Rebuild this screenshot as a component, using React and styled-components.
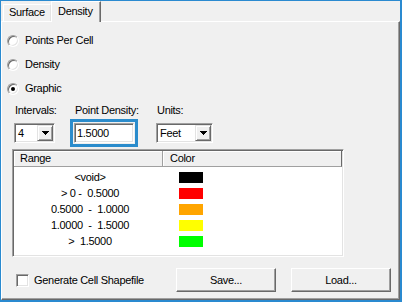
import React from 'react';
import styled, { createGlobalStyle } from 'styled-components';

const Global = createGlobalStyle`
  html, body { margin: 0; padding: 0; background: #f0f0f0; }
  body { font-family: "Liberation Sans", Arial, sans-serif; font-size: 11px; color: #000; }
`;

const Window = styled.div`
  width: 402px;
  height: 302px;
  box-sizing: border-box;
  border-style: solid;
  border-color: #2a8ad0;
  border-width: 1px 2px 2px 1px;
  background: #f0f0f0;
  display: flex;
  flex-direction: column;
  letter-spacing: -0.3px;
`;

const TabStrip = styled.div`
  height: 20px;
  display: flex;
  align-items: flex-end;
  padding-left: 2px;
`;

const Tab = styled.div`
  box-sizing: border-box;
  position: relative;
  z-index: ${p => (p.$active ? 1 : 0)};
  width: ${p => p.$w}px;
  height: ${p => (p.$active ? '21px' : '17px')};
  margin-bottom: ${p => (p.$active ? '-1px' : '0')};
  padding-left: ${p => (p.$active ? '6px' : '5px')};
  line-height: ${p => (p.$active ? '19px' : '15px')};
  background: #f0f0f0;
  border-style: solid;
  border-width: 1px 1px 0 1px;
  border-color: #fff ${p => (p.$active ? '#696969' : '#e3e3e3')} transparent #fff;
  box-shadow: ${p => (p.$active ? 'inset -1px 0 #a0a0a0' : 'none')};
`;

const Panel = styled.div`
  flex: 1;
  box-sizing: border-box;
  border-style: solid;
  border-width: 1px;
  border-color: #fff #696969 #696969 #fff;
  box-shadow: inset -1px -1px #a0a0a0;
  display: flex;
  flex-direction: column;
`;

const RadioGroup = styled.div`
  display: flex;
  flex-direction: column;
  gap: 11px;
  margin: 12px 0 0 5px;
`;

const RadioRow = styled.label`
  display: flex;
  align-items: center;
  gap: 6px;
  height: 13px;
  line-height: 13px;
`;

const RadioCircle = styled.span`
  box-sizing: border-box;
  width: 12px;
  height: 12px;
  border-radius: 50%;
  background: #fff;
  border: 1px solid;
  border-color: #a0a0a0 #fff #fff #a0a0a0;
  box-shadow: inset 1px 1px #696969, inset -1px -1px #e3e3e3;
  display: flex;
  align-items: center;
  justify-content: center;
  &::after {
    content: '';
    width: 4px;
    height: 4px;
    border-radius: 50%;
    background: ${p => (p.$checked ? '#000' : 'transparent')};
  }
`;

const Fields = styled.div`
  display: grid;
  grid-template-columns: 56px 86px 57px;
  grid-template-rows: 13px 28px;
  row-gap: 2px;
  align-items: center;
  margin: 9px 0 0 12px;
`;

const FieldLabel = styled.div`
  line-height: 13px;
  padding-left: ${p => p.$pad}px;
`;

const Combo = styled.div`
  box-sizing: border-box;
  width: ${p => p.$w}px;
  height: 20px;
  padding: 1px;
  background: #fff;
  border: 1px solid;
  border-color: #a0a0a0 #fff #fff #a0a0a0;
  box-shadow: inset 1px 1px #696969, inset -1px -1px #e3e3e3;
  display: flex;
  align-items: center;
`;

const ComboText = styled.span`
  flex: 1;
  padding-left: 2px;
  line-height: 16px;
`;

const DropButton = styled.span`
  box-sizing: border-box;
  width: 16px;
  height: 16px;
  background: #f0f0f0;
  border: 1px solid;
  border-color: #e3e3e3 #696969 #696969 #e3e3e3;
  box-shadow: inset 1px 1px #fff, inset -1px -1px #a0a0a0;
  display: flex;
  align-items: center;
  justify-content: center;
`;

const FocusRing = styled.div`
  box-sizing: border-box;
  width: 68px;
  height: 28px;
  border: 3px solid #2b8ccc;
  padding: 1px;
`;

const Edit = styled.div`
  box-sizing: border-box;
  height: 20px;
  padding-left: 2px;
  background: #fff;
  border: 1px solid;
  border-color: #a0a0a0 #fff #fff #a0a0a0;
  box-shadow: inset 1px 1px #696969, inset -1px -1px #e3e3e3;
  line-height: 18px;
`;

const List = styled.div`
  box-sizing: border-box;
  width: 332px;
  height: 108px;
  margin: 2px 0 0 10px;
  padding: 1px;
  background: #fff;
  border: 1px solid;
  border-color: #a0a0a0 #fff #fff #a0a0a0;
  box-shadow: inset 1px 1px #696969, inset -1px -1px #e3e3e3;
`;

const HeaderRow = styled.div`
  display: grid;
  grid-template-columns: 149px 1fr;
  height: 16px;
`;

const HeaderCell = styled.div`
  box-sizing: border-box;
  background: #f0f0f0;
  border-right: 1px solid ${p => (p.$last ? '#696969' : '#a0a0a0')};
  border-bottom: 1px solid #a0a0a0;
  box-shadow: inset 1px 1px #fff;
  padding-left: ${p => p.$pad}px;
  line-height: 15px;
`;

const Rows = styled.div`
  padding-top: 2px;
`;

const Row = styled.div`
  display: grid;
  grid-template-columns: 149px 1fr;
  height: 16px;
  align-items: center;
`;

const RangeText = styled.div`
  text-align: center;
  white-space: pre;
  line-height: 16px;
  padding-left: 3px;
`;

const Swatch = styled.div`
  width: 24px;
  height: 11px;
  margin-left: 16px;
  background: ${p => p.$color};
`;

const BottomRow = styled.div`
  display: flex;
  align-items: center;
  height: 24px;
  margin-top: 11px;
  padding: 0 8px 0 14px;
`;

const CheckLabel = styled.label`
  display: flex;
  align-items: center;
  gap: 5px;
  line-height: 13px;
`;

const CheckBox = styled.span`
  box-sizing: border-box;
  width: 13px;
  height: 13px;
  background: #fff;
  border: 1px solid;
  border-color: #a0a0a0 #fff #fff #a0a0a0;
  box-shadow: inset 1px 1px #696969, inset -1px -1px #e3e3e3;
`;

const Buttons = styled.div`
  margin-left: auto;
  display: flex;
  gap: 15px;
`;

const Button = styled.div`
  box-sizing: border-box;
  width: 100px;
  height: 24px;
  background: #f0f0f0;
  border: 1px solid;
  border-color: #fff #696969 #696969 #fff;
  box-shadow: inset -1px -1px #a0a0a0;
  display: flex;
  align-items: center;
  justify-content: center;
  line-height: 13px;
`;

const Arrow = () => (
  <svg width="7" height="4" viewBox="0 0 7 4">
    <path d="M0 0h7v1H6v1H5v1H4v1H3V3H2V2H1V1H0z" fill="#000" />
  </svg>
);

const ranges = [
  { text: '<void>', color: '#000000' },
  { text: '> 0 -  0.5000', color: '#ff0000' },
  { text: '0.5000  -  1.0000', color: '#ffa500' },
  { text: '1.0000  -  1.5000', color: '#ffff00' },
  { text: '>  1.5000', color: '#00ff00' },
];

export default function App() {
  return (
    <>
      <Global />
      <Window>
        <TabStrip>
          <Tab $w={48}>Surface</Tab>
          <Tab $w={50} $active>Density</Tab>
        </TabStrip>
        <Panel>
          <RadioGroup>
            <RadioRow><RadioCircle />Points Per Cell</RadioRow>
            <RadioRow><RadioCircle />Density</RadioRow>
            <RadioRow><RadioCircle $checked />Graphic</RadioRow>
          </RadioGroup>
          <Fields>
            <FieldLabel $pad={1}>Intervals:</FieldLabel>
            <FieldLabel $pad={5}>Point Density:</FieldLabel>
            <FieldLabel $pad={1}>Units:</FieldLabel>
            <Combo $w={41}>
              <ComboText>4</ComboText>
              <DropButton><Arrow /></DropButton>
            </Combo>
            <FocusRing>
              <Edit>1.5000</Edit>
            </FocusRing>
            <Combo $w={57}>
              <ComboText>Feet</ComboText>
              <DropButton><Arrow /></DropButton>
            </Combo>
          </Fields>
          <List>
            <HeaderRow>
              <HeaderCell $pad={6}>Range</HeaderCell>
              <HeaderCell $pad={7} $last>Color</HeaderCell>
            </HeaderRow>
            <Rows>
              {ranges.map(r => (
                <Row key={r.text}>
                  <RangeText>{r.text}</RangeText>
                  <Swatch $color={r.color} />
                </Row>
              ))}
            </Rows>
          </List>
          <BottomRow>
            <CheckLabel><CheckBox />Generate Cell Shapefile</CheckLabel>
            <Buttons>
              <Button>Save...</Button>
              <Button>Load...</Button>
            </Buttons>
          </BottomRow>
        </Panel>
      </Window>
    </>
  );
}
